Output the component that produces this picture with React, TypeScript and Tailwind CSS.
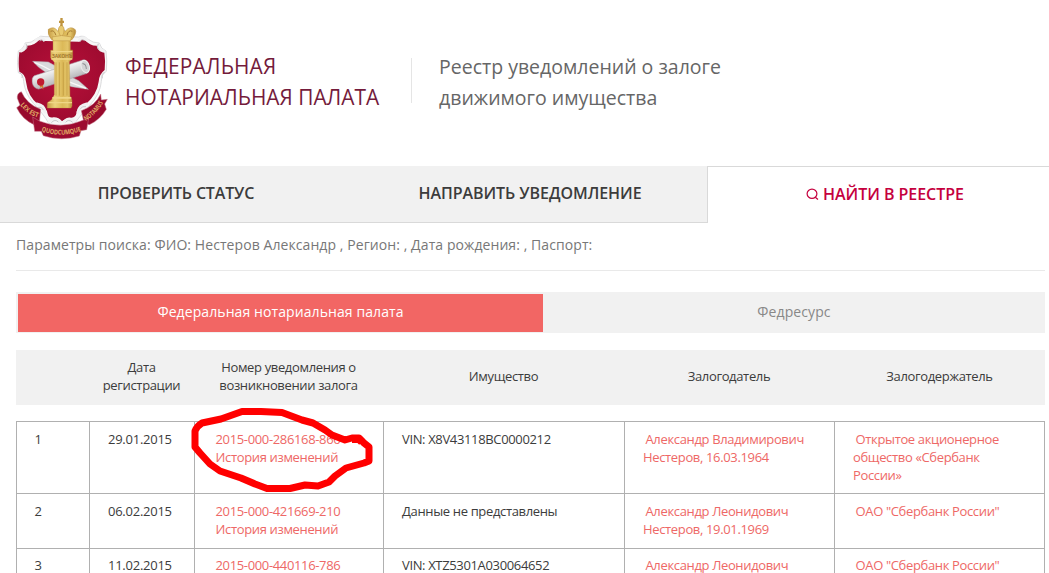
import React from "react";

const rows = [
  {
    n: "1", date: "29.01.2015", num: "2015-000-286168-866", prop: "VIN: X8V43118BC0000212",
    giver: ["Александр Владимирович", "Нестеров, 16.03.1964"],
    holder: ["Открытое акционерное", "общество «Сбербанк", "России»"], h: "h-[72px]",
  },
  {
    n: "2", date: "06.02.2015", num: "2015-000-421669-210", prop: "Данные не представлены",
    giver: ["Александр Леонидович", "Нестеров, 19.01.1969"],
    holder: ['ОАО "Сбербанк России"'], h: "h-[55px]",
  },
  {
    n: "3", date: "11.02.2015", num: "2015-000-440116-786", prop: "VIN: XTZ5301A030064652",
    giver: ["Александр Леонидович", "Нестеров, 19.01.1969"],
    holder: ['ОАО "Сбербанк России"'], h: "h-[55px]",
  },
];

function Emblem() {
  return (
    <svg className="block h-[150px] w-[125px] shrink-0" viewBox="0 0 375 450">
      <defs>
        <linearGradient id="gold" x1="0" x2="1">
          <stop offset="0" stopColor="#c69a42" />
          <stop offset=".3" stopColor="#ecd27c" />
          <stop offset=".6" stopColor="#dcb958" />
          <stop offset=".8" stopColor="#e3c469" />
          <stop offset="1" stopColor="#b58936" />
        </linearGradient>
        <radialGradient id="shield" cx=".5" cy=".45" r=".65">
          <stop offset="0" stopColor="#b8103a" />
          <stop offset="1" stopColor="#9a0a2e" />
        </radialGradient>
        <linearGradient id="paper" x1="0" y1="0" x2="0" y2="1">
          <stop offset="0" stopColor="#f4f4f5" />
          <stop offset=".4" stopColor="#dededf" />
          <stop offset="1" stopColor="#b9b9bc" />
        </linearGradient>
        <path id="left" d="M60 315Q84 346 122 355" />
        <path id="middle" d="M124 393Q184 416 250 391" />
        <path id="right" d="M257 363Q292 342 313 302" />
      </defs>
      <path d="M135 110Q122 104 110 116Q94 130 75 129Q72 146 55 153Q50 190 55 218Q70 220 71 245Q75 280 100 310Q132 344 145 368Q163 385 186 378Q208 385 226 367Q244 343 270 315Q301 282 304 244Q304 223 319 214Q322 182 318 153Q302 147 298 129Q279 130 263 117Q250 104 236 111Z" fill="#f7f7f7" stroke="#dcdcde" strokeWidth="3" />
      <path d="M135 123Q130 113 119 118Q103 139 78 137Q76 150 58 157Q54 190 58 215Q76 221 78 245Q83 288 115 314Q139 318 143 342Q146 355 160 352Q176 351 186 364Q201 350 213 353Q227 354 230 337Q233 319 258 312Q291 283 296 245Q297 223 314 210Q317 183 313 158Q298 150 294 137Q270 139 254 119Q239 113 238 125Z" fill="url(#shield)" />
      <g fill="none" stroke="#f1f1f2" strokeWidth="9" strokeLinecap="round">
        <path d="M108 120Q126 109 132 120M238 120Q246 109 262 120M76 134Q79 148 63 153M295 134Q293 148 310 153M111 312Q133 316 135 336M260 312Q238 316 234 336M148 364Q166 352 181 366M224 364Q206 352 192 366" />
      </g>
      <g fill="none" stroke="#bfc0c3" strokeWidth="2.5">
        <path d="M78 131Q86 142 77 149M295 131Q288 142 297 149M59 219Q69 222 66 234M314 217Q303 221 307 235M114 322Q125 318 130 330M258 320Q246 317 240 328M154 368Q165 356 175 366M218 367Q205 356 197 367M119 123Q128 115 131 125M254 122Q243 115 241 125" />
      </g>
      <path d="M98 184L145 186Q176 201 208 228L236 242L265 268L215 260Q166 244 136 216L116 202Z" fill="#d9dadc" stroke="#b1aeb2" strokeWidth="1.5" />
      <path d="M103 187Q155 207 188 238L258 265" fill="none" stroke="#f8f8f8" strokeWidth="4" />
      <g transform="rotate(-18 184 222)">
        <path d="M105 202H259Q272 204 271 224Q269 241 258 244H105Q91 236 93 221Q95 205 105 202Z" fill="url(#paper)" stroke="#aaaaae" strokeWidth="1.5" />
        <ellipse cx="259" cy="223" rx="12" ry="19" fill="#d3d3d5" stroke="#ededee" strokeWidth="3" />
        <path d="M254 212Q264 216 260 231" fill="none" stroke="#909095" strokeWidth="3" />
      </g>
      <path d="M119 250L120 264L124 260L130 269L129 247" fill="#d07b30" />
      <circle cx="122" cy="246" r="11" fill="#c11a31" />
      <path d="M52 295Q50 280 64 275Q80 312 122 328L118 369L102 374Q66 357 50 323L60 315Z" fill="#980a2d" stroke="#c77b8d" strokeWidth="1.5" />
      <path d="M304 300L322 298L314 312L319 328Q300 360 268 374L252 369L244 332Q287 316 302 282Z" fill="#980a2d" stroke="#c77b8d" strokeWidth="1.5" />
      <path d="M98 351L118 363Q184 389 248 361L266 355L260 389L243 392L238 408Q184 425 130 407L124 394L104 394Z" fill="#9d0b30" stroke="#c77b8d" strokeWidth="1.5" />
      <path d="M145 88Q163 76 173 94L184 74L195 94Q211 75 226 89Q231 99 216 119H155Q141 104 145 88Z" fill="url(#gold)" stroke="#b68a3a" strokeWidth="1.5" />
      <path d="M152 94Q162 88 168 106M217 94Q205 88 201 106" fill="none" stroke="#a77b31" strokeWidth="3" />
      <path d="M176 84Q184 68 192 84Q194 101 185 111Q174 101 176 84Z" fill="#e8ca70" stroke="#b68a3a" strokeWidth="1.5" />
      <path d="M181 54H188V62H192V69H188V78H181V69H177V62H181Z" fill="#bf943e" />
      <path d="M156 111Q184 102 215 111L211 123H159Z" fill="#ead07b" stroke="#b68a3a" strokeWidth="1.5" />
      <path d="M159 123H211V150H218V174L208 185L210 288L216 300V318L213 324H142V308L155 299L163 284V187L152 174V151H159Z" fill="url(#gold)" stroke="#c19a43" strokeWidth="1" />
      <path d="M154 153H217V157H154ZM154 175H217V179H154ZM157 291H214V296H157ZM145 306H216V310H145Z" fill="#efd686" />
      <path d="M168 187V287M178 187V287M190 187V287M201 187V287" stroke="#c39c42" strokeWidth="2.5" />
      <text x="155" y="173" textLength="62" fill="#a37831" className="font-['Open_Sans'] text-[15px] font-bold">ЗАКОНЪ</text>
      <g fill="#e0ab66" className="font-['Open_Sans'] text-[20px] font-bold">
        <text><textPath href="#left" textLength="66" lengthAdjust="spacingAndGlyphs">LEX EST</textPath></text>
        <text><textPath href="#middle" textLength="123" lengthAdjust="spacingAndGlyphs">QUODCUMQUE</textPath></text>
        <text><textPath href="#right" textLength="77" lengthAdjust="spacingAndGlyphs">NOTAMUS</textPath></text>
      </g>
    </svg>
  );
}

function Marker() {
  return (
    <svg className="pointer-events-none absolute top-[-17px] left-[-7.5px] z-10 h-[90px] w-[187px]" viewBox="187 405 187 90">
      <path d="M201 423L220 419L241 411.5H260L281 412.5L301 420L312 423L324 430L331 435L344 440L351 438H358L363 443L368 447V461L363 463L345 468L334 476L328 482L317 486L304 485L289 488.5H266L254 484L240 478L219 471L209 464L199 453L194 447V431Q196 426 201 423Z" fill="none" stroke="#ff0000" strokeWidth="7" strokeLinejoin="round" />
      <path d="M351 439H358L361 442" fill="none" stroke="#ff0000" strokeWidth="8" strokeLinejoin="round" />
    </svg>
  );
}

export default function App() {
  return (
    <div className="h-[573px] w-[1049px] overflow-hidden bg-white font-['Open_Sans','Noto_Sans',sans-serif] text-[#3c3c3c]">
      <header className="flex h-[166px] items-start">
        <Emblem />
        <div className="mt-[51px] w-[286px] text-[20.9px] leading-[31px] whitespace-nowrap text-[#741b3b]">
          <div className="tracking-[0.15px]">ФЕДЕРАЛЬНАЯ</div><div>НОТАРИАЛЬНАЯ ПАЛАТА</div>
        </div>
        <div className="mt-[58px] h-[45px] w-px bg-[#e5e5e5]" />
        <div className="mt-[51px] ml-[27px] text-[19.5px] leading-[31px] whitespace-nowrap text-[#666]">
          <div>Реестр уведомлений о залоге</div><div>движимого имущества</div>
        </div>
      </header>
      <nav className="flex h-[57px] text-[16px] font-semibold whitespace-nowrap">
        <div className="flex w-[708px] border-r border-b border-[#d9d9d9] bg-[#f1f1f1] leading-[54px]">
          <div className="w-[352px] shrink-0 text-center tracking-[-0.15px]">ПРОВЕРИТЬ СТАТУС</div>
          <div className="w-[355px] shrink-0 pl-[1px] text-center tracking-[-0.05px]">НАПРАВИТЬ УВЕДОМЛЕНИЕ</div>
        </div>
        <div className="flex flex-1 items-center border-t border-[#d9d9d9] pb-[2px] pl-[98px] tracking-[-0.04px] text-[#c5003e]">
          <svg className="mr-[4px] size-[13px]" viewBox="0 0 13 13" fill="none" stroke="currentColor" strokeWidth="1.2"><ellipse cx="6" cy="5.7" rx="4.9" ry="4.6" /><path d="M9.3 9.2L12 11.5" /></svg>
          <span>НАЙТИ В РЕЕСТРЕ</span>
        </div>
      </nav>
      <main className="ml-4 w-[1029px]">
        <div className="h-[48px] border-b border-[#e9e9e9] text-[14px] leading-[44px] tracking-[0.078px] text-[#777]">Параметры поиска: ФИО: Нестеров Александр , Регион: , Дата рождения: , Паспорт:</div>
        <div className="mt-[21px] flex h-[41px] bg-[#f1f1f1] pt-[2px] pl-[2px] text-center text-[14px] leading-[36px] tracking-[0.09px]">
          <div className="h-[38px] w-[525px] bg-[#f26664] text-white">Федеральная нотариальная палата</div>
          <div className="flex-1 text-[#888]">Федресурс</div>
        </div>
        <div className="mt-[17px] grid h-[55px] grid-cols-[73px_105px_189px_241px_210px_211px] items-center bg-[#f1f1f1] pb-[3px] text-center text-[13px] leading-[18px] tracking-[-0.35px]">
          <div /><div>Дата<br />регистрации</div><div>Номер уведомления о<br />возникновении залога</div><div>Имущество</div><div>Залогодатель</div><div>Залогодержатель</div>
        </div>
        <div className="mt-[16px] border-t border-l border-[#b0b0b0] text-[13px] leading-[18px] tracking-[-0.35px] whitespace-nowrap">
          {rows.map((r, i) => (
            <div key={r.n} className={`grid grid-cols-[73px_105px_189px_241px_210px_210px] ${r.h} *:border-r *:border-b *:border-[#b0b0b0] ${i === 2 ? "*:pt-[7px]" : "*:pt-[8px]"}`}>
              <div className="pl-[17.5px]">{r.n}</div>
              <div className="pl-[18px] tracking-[-0.25px]">{r.date}</div>
              <div className="relative pl-[20.5px] text-[#ee6866]">{r.num}<br />История изменений{i === 0 && <Marker />}</div>
              <div className="pl-[18px]">{r.prop}</div>
              <div className="pl-[18px] text-[#ee6866]">{r.giver.map((line, j) => <div key={j} className={j === 0 ? "pl-[2.5px]" : ""}>{line}</div>)}</div>
              <div className="pl-[18px] text-[#ee6866]">{r.holder.map((line, j) => <div key={j} className={j === 0 ? "pl-[2.5px]" : ""}>{line}</div>)}</div>
            </div>
          ))}
        </div>
      </main>
    </div>
  );
}
